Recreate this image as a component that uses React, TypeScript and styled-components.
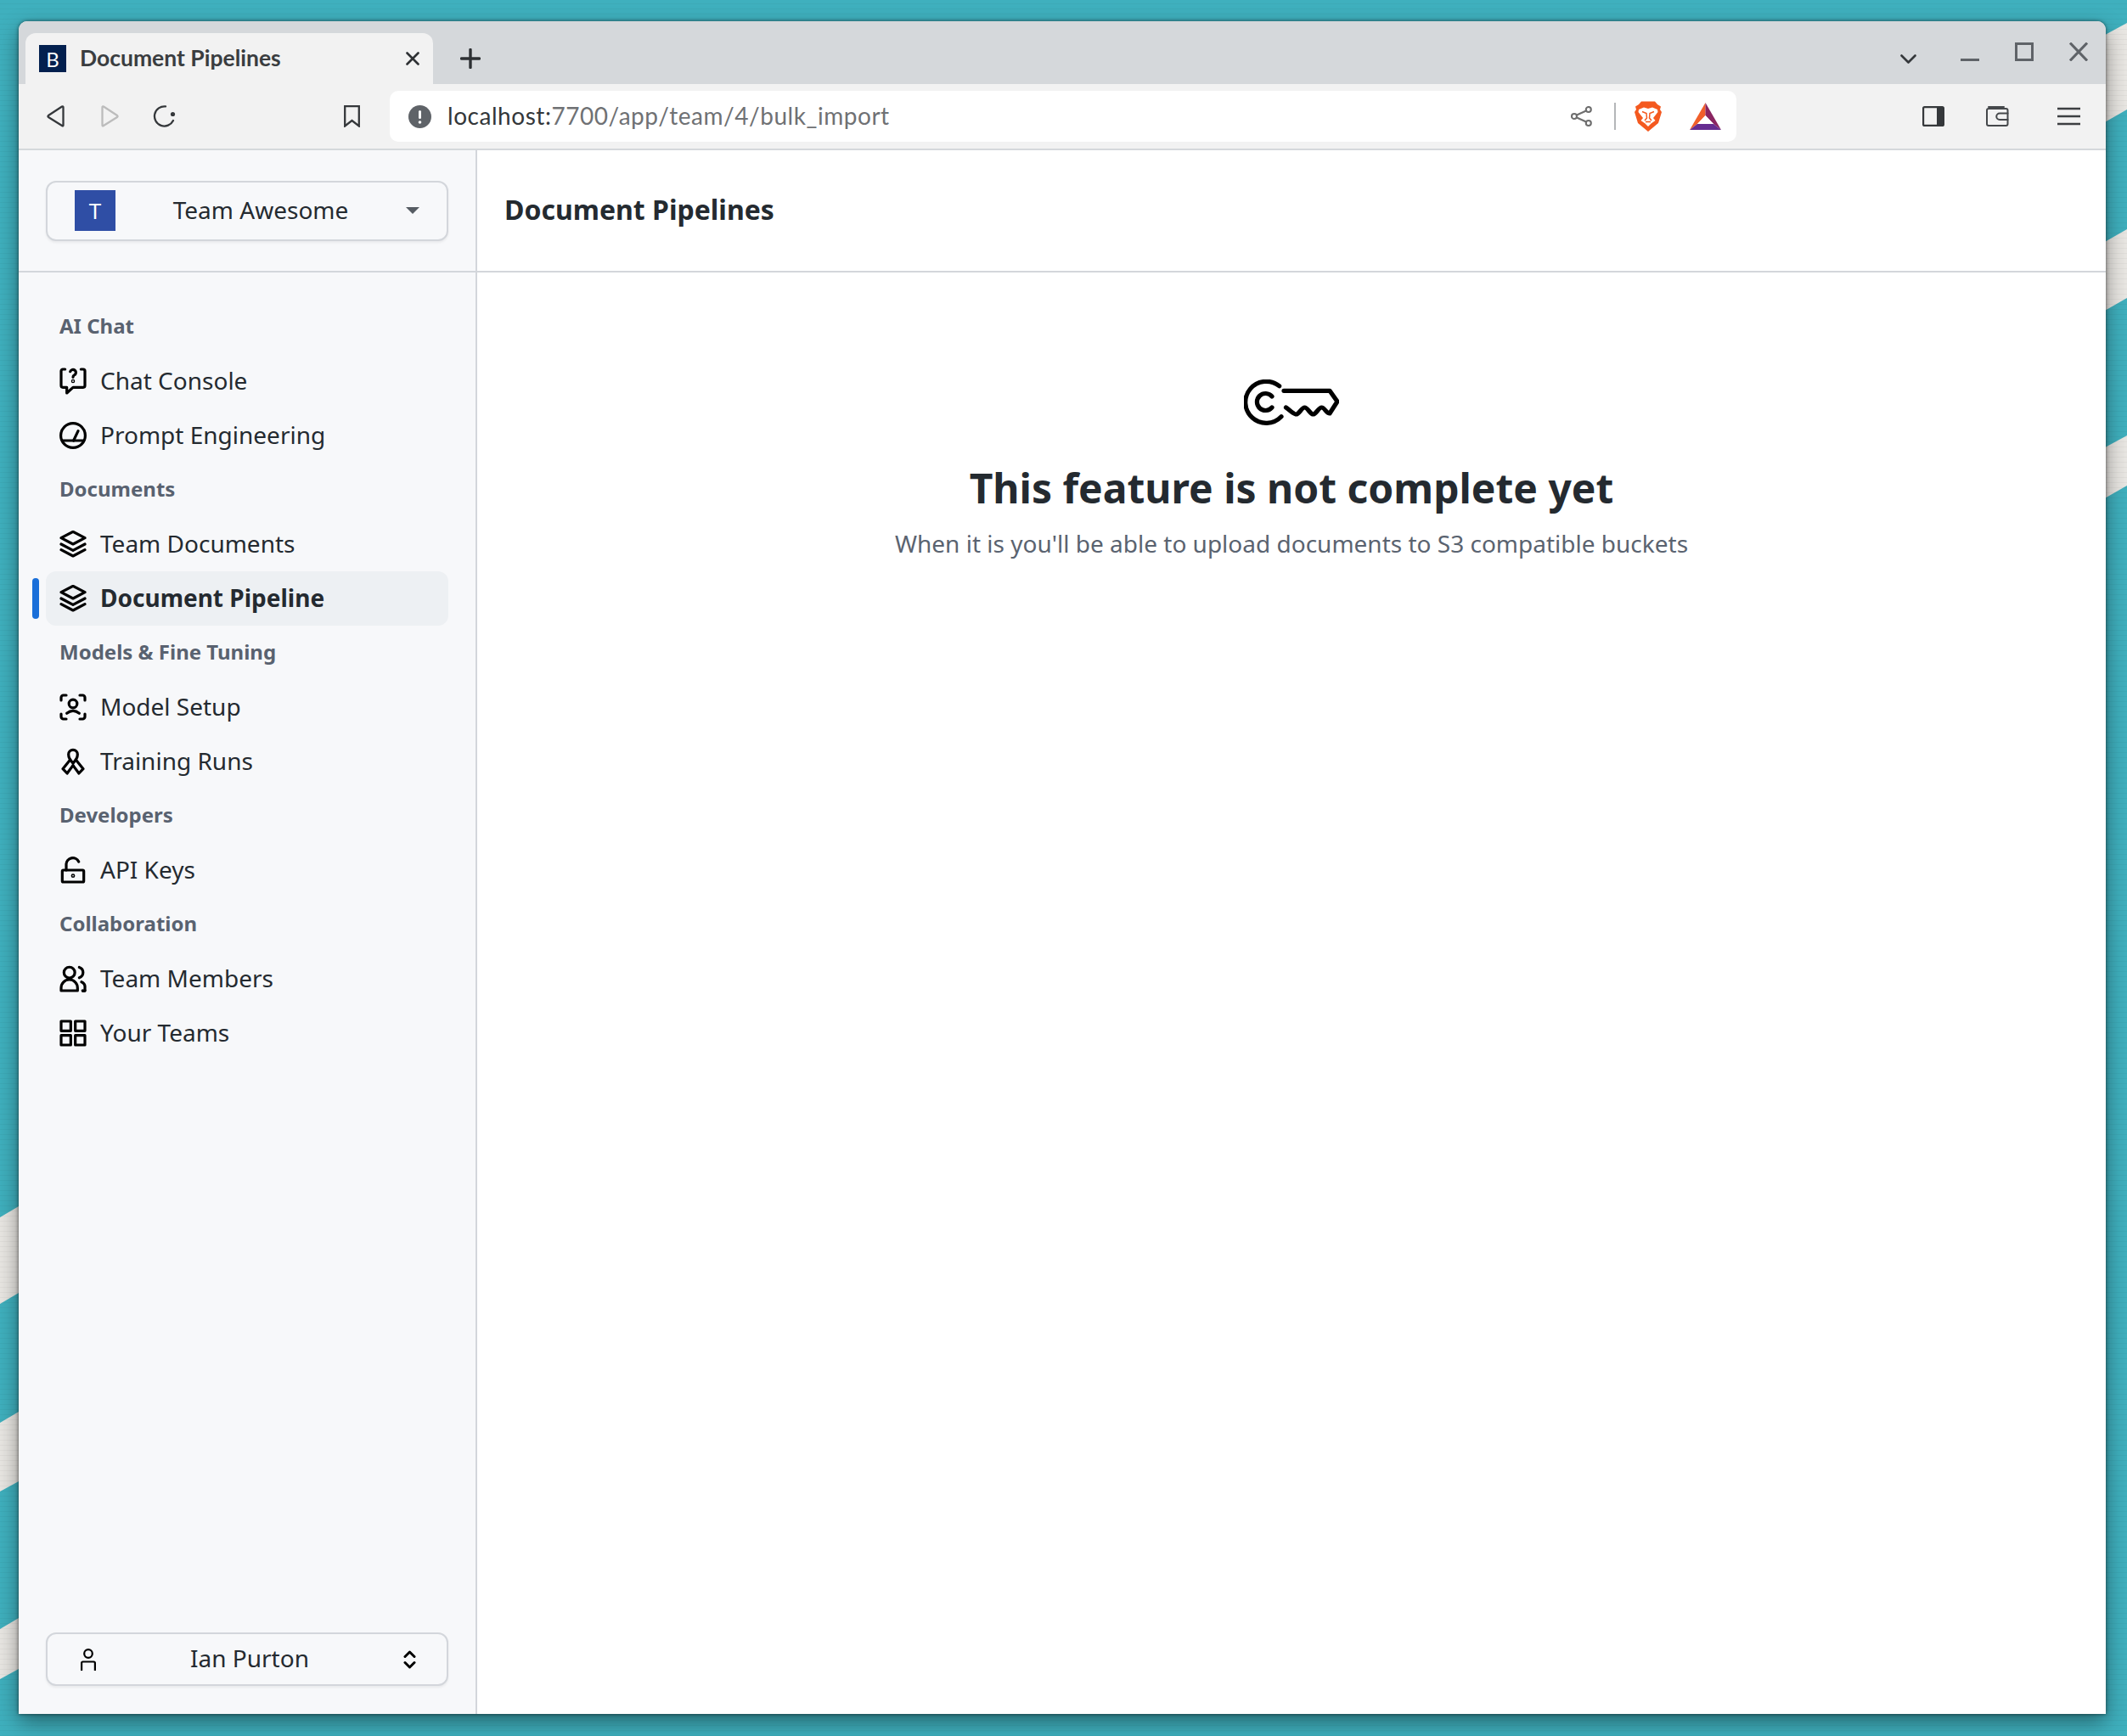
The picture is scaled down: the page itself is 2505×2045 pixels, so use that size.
import React from "react";
import styled, { createGlobalStyle } from "styled-components";

const Global = createGlobalStyle`
  html, body { margin: 0; padding: 0; background: #3fb0be; }
  * { box-sizing: border-box; }
`;

const Desktop = styled.div`
  position: relative;
  width: 2505px;
  height: 2045px;
  overflow: hidden;
  padding: 25px 25px 26px 22px;
  background: #3fb0be;
`;

const Wallpaper = styled.svg`
  position: absolute;
  inset: 0;
  width: 2505px;
  height: 2045px;
`;

const Grain = styled.div`
  position: absolute;
  inset: 0;
  background-image: repeating-linear-gradient(0deg, rgba(0, 0, 0, 0.035) 0 1px, transparent 1px 6px);
`;

const Window = styled.div`
  position: relative;
  width: 2458px;
  height: 1994px;
  display: flex;
  flex-direction: column;
  border-radius: 10px 10px 0 0;
  overflow: hidden;
  background: #fff;
  box-shadow: 0 0 4px rgba(0, 0, 0, 0.55);
`;

const WindowShade = styled.div`
  position: absolute;
  left: 22px;
  top: 25px;
  width: 2458px;
  height: 1994px;
  border-radius: 10px 10px 0 0;
  box-shadow: 0 10px 26px rgba(0, 0, 0, 0.42);
`;

const TabStrip = styled.div`
  height: 74px;
  flex: none;
  display: flex;
  align-items: flex-end;
  padding: 0 21px 0 8px;
  background: #d5d8db;
`;

const Tab = styled.div`
  width: 480px;
  height: 60px;
  display: flex;
  align-items: center;
  padding: 0 16px;
  border-radius: 12px 12px 0 0;
  background: #f2f2f2;
`;

const Favicon = styled.div`
  width: 32px;
  height: 32px;
  flex: none;
  display: flex;
  align-items: center;
  justify-content: center;
  background: #03204f;
  color: #fff;
  font: 400 24px "Lato", sans-serif;
`;

const TabTitle = styled.span`
  margin-left: 16px;
  margin-right: auto;
  padding-bottom: 3px;
  font: 700 26.5px "Lato", sans-serif;
  color: #3a3d40;
`;

const PlusWrap = styled.div`
  margin-left: 32px;
  align-self: flex-start;
  margin-top: 32px;
  display: flex;
`;

const WindowControls = styled.div`
  margin-left: auto;
  align-self: flex-start;
  margin-top: 25px;
  display: flex;
  align-items: flex-start;
  gap: 42px;
`;

const TabListButton = styled.div`
  margin-top: 14px;
  margin-right: 10px;
  display: flex;
`;

const Toolbar = styled.div`
  height: 78px;
  flex: none;
  display: flex;
  align-items: flex-start;
  padding: 8px 0 0 33px;
  background: #f2f2f2;
  border-bottom: 2px solid #d5d8db;
`;

const ToolIcon = styled.div<{ $ml: number }>`
  margin-left: ${(p) => p.$ml}px;
  height: 60px;
  display: flex;
  align-items: center;
  flex: none;
`;

const Omnibox = styled.div`
  width: 1586px;
  height: 60px;
  margin-left: 35px;
  flex: none;
  display: flex;
  align-items: center;
  padding: 0 18px 0 22px;
  border-radius: 10px;
  background: #fff;
`;

const Url = styled.span`
  margin-left: 19px;
  margin-right: auto;
  padding-bottom: 3px;
  font: 400 28px "Lato", sans-serif;
  letter-spacing: 0.54px;
  color: #6f7174;
`;

const UrlHost = styled.span`
  color: #33373a;
`;

const OmniDivider = styled.div`
  width: 2px;
  height: 32px;
  margin: 0 22px 0 26px;
  background: #b4b6b8;
`;

const BatWrap = styled.div`
  margin-left: 33px;
  display: flex;
`;

const Body = styled.div`
  flex: 1;
  min-height: 0;
  display: flex;
`;

const Sidebar = styled.aside`
  width: 540px;
  flex: none;
  display: flex;
  flex-direction: column;
  background: #f7f8fa;
  border-right: 2px solid #d3d6db;
`;

const SidebarTop = styled.div`
  height: 144px;
  flex: none;
  display: flex;
  align-items: center;
  padding: 0 32px;
  border-bottom: 2px solid #d3d6db;
`;

const SelectButton = styled.div<{ $h: number; $pl: number; $pr: number }>`
  width: 100%;
  height: ${(p) => p.$h}px;
  display: flex;
  align-items: center;
  justify-content: space-between;
  padding: 0 ${(p) => p.$pr}px 0 ${(p) => p.$pl}px;
  border: 2px solid #d3d6db;
  border-radius: 12px;
  background: #f7f8fa;
  box-shadow: 0 2px 3px rgba(0, 0, 0, 0.06);
  font: 400 28px "Noto Sans", sans-serif;
  color: #242a30;
`;

const LabelText = styled.span`
  padding-bottom: 3px;
`;

const Avatar = styled.div`
  width: 48px;
  height: 48px;
  display: flex;
  align-items: center;
  justify-content: center;
  background: #2f4ea5;
  color: #fff;
  font: 400 26px "Noto Sans", sans-serif;
`;

const Caret = styled.div`
  width: 0;
  height: 0;
  border-left: 8px solid transparent;
  border-right: 8px solid transparent;
  border-top: 8px solid #565c63;
`;

const Nav = styled.nav`
  flex: 1;
  display: flex;
  flex-direction: column;
  padding: 32px 32px 0 32px;
`;

const SectionLabel = styled.div`
  height: 64px;
  display: flex;
  align-items: center;
  padding: 0 0 3px 16px;
  font: 700 24px "Noto Sans", sans-serif;
  color: #596270;
`;

const NavRow = styled.div<{ $active?: boolean }>`
  position: relative;
  height: 64px;
  display: flex;
  align-items: center;
  gap: 16px;
  padding-left: 16px;
  border-radius: 12px;
  background: ${(p) => (p.$active ? "#edf0f3" : "transparent")};
  font: ${(p) => (p.$active ? 700 : 400)} 28px "Noto Sans", sans-serif;
  color: #242a30;
`;

const ActiveBar = styled.span`
  position: absolute;
  left: -16px;
  top: 8px;
  width: 8px;
  height: 48px;
  border-radius: 4px;
  background: #1a6fd9;
`;

const SidebarBottom = styled.div`
  padding: 0 32px 33px;
`;

const Main = styled.main`
  flex: 1;
  min-width: 0;
  display: flex;
  flex-direction: column;
`;

const Header = styled.header`
  height: 144px;
  flex: none;
  display: flex;
  align-items: center;
  padding: 0 0 3px 32px;
  border-bottom: 2px solid #d3d6db;
  font: 700 32px "Noto Sans", sans-serif;
  color: #242a30;
`;

const Empty = styled.section`
  display: flex;
  flex-direction: column;
  align-items: center;
  padding-top: 126px;
`;

const Title = styled.h1`
  margin: 42px 0 13px;
  font: 700 48px/64px "Noto Sans", sans-serif;
  color: #242a30;
`;

const Subtitle = styled.p`
  margin: 0;
  font: 400 28px/40px "Noto Sans", sans-serif;
  color: #5a6370;
`;

const Svg = styled.svg<{ $c?: string; $sw?: number }>`
  display: block;
  flex: none;
  fill: none;
  stroke: ${(p) => p.$c ?? "#000"};
  stroke-width: ${(p) => p.$sw ?? 2.4};
  stroke-linecap: round;
  stroke-linejoin: round;
`;

const Icon = ({ children }: { children: React.ReactNode }) => (
  <Svg width={32} height={32} viewBox="0 0 24 24" $sw={2.4}>
    {children}
  </Svg>
);

const ChatIcon = () => (
  <Icon>
    <path d="M5 1.500H3a1.500 1.500 0 0 0-1.500 1.500v13a1.500 1.500 0 0 0 1.500 1.500h3.500v5l5.500-5h9a1.500 1.500 0 0 0 1.500-1.500V3a1.500 1.500 0 0 0-1.500-1.500h-2" />
    <path d="M9.500 3.500a2.600 2.600 0 1 1 3.600 3.200c-.8.400-1.100.900-1.100 1.800" />
    <circle cx="12" cy="12" r=".5" />
  </Icon>
);
const GaugeIcon = () => (
  <Icon>
    <circle cx="12" cy="12" r="10.800" />
    <path d="M2.500 16.500h19" />
    <path d="M12.500 16.500L16.500 8" />
  </Icon>
);
const LayersIcon = () => (
  <Icon>
    <path d="M12 1L22.500 6.500L12 12L1.500 6.500Z" />
    <path d="M1.500 12L12 17.500L22.500 12" />
    <path d="M1.500 17L12 22.500L22.500 17" />
  </Icon>
);
const ScanIcon = () => (
  <Icon>
    <path d="M6 1.500H3.500a2 2 0 0 0-2 2V6" />
    <path d="M18 1.500h2.500a2 2 0 0 1 2 2V6" />
    <path d="M1.500 18v2.500a2 2 0 0 0 2 2H6" />
    <path d="M22.500 18v2.500a2 2 0 0 1-2 2H18" />
    <circle cx="12" cy="9" r="3.600" />
    <path d="M6.500 17.500Q12 13 17.500 17.500" />
  </Icon>
);
const RibbonIcon = () => (
  <Icon>
    <path d="M12 13.500C9.500 11 8 8.500 8 5.800a4 4 0 0 1 8 0c0 2.700-1.500 5.200-4 7.700Z" />
    <path d="M9.500 10.500L3 18.500L6.800 22.500L12 15.500" />
    <path d="M14.500 10.500L21 18.500L17.200 22.500L12 15.500" />
  </Icon>
);
const LockIcon = () => (
  <Icon>
    <rect x="2.500" y="12" width="19" height="10.500" rx="1" />
    <path d="M6 12V7a5.800 5.800 0 0 1 11-2.500" />
    <circle cx="12" cy="17" r=".6" />
  </Icon>
);
const UsersIcon = () => (
  <Icon>
    <circle cx="8.800" cy="6.500" r="4.800" />
    <path d="M1.500 22.500v-2.500a7.200 7.200 0 0 1 14.500 0v2.500Z" />
    <path d="M17.500 1.800a4.900 4.900 0 0 1 0 9.300" />
    <path d="M19.500 14.800a5 5 0 0 1 3 5.200v1.500a1 1 0 0 1-2 1" />
  </Icon>
);
const GridIcon = () => (
  <Icon>
    <rect x="1.500" y="1.500" width="8.500" height="8.500" />
    <rect x="14" y="1.500" width="8.500" height="8.500" />
    <rect x="1.500" y="14" width="8.500" height="8.500" />
    <rect x="14" y="14" width="8.500" height="8.500" />
  </Icon>
);

const groups: { label: string; items: { t: string; i: React.ReactNode; a?: boolean }[] }[] = [
  {
    label: "AI Chat",
    items: [
      { t: "Chat Console", i: <ChatIcon /> },
      { t: "Prompt Engineering", i: <GaugeIcon /> },
    ],
  },
  {
    label: "Documents",
    items: [
      { t: "Team Documents", i: <LayersIcon /> },
      { t: "Document Pipeline", i: <LayersIcon />, a: true },
    ],
  },
  {
    label: "Models & Fine Tuning",
    items: [
      { t: "Model Setup", i: <ScanIcon /> },
      { t: "Training Runs", i: <RibbonIcon /> },
    ],
  },
  { label: "Developers", items: [{ t: "API Keys", i: <LockIcon /> }] },
  {
    label: "Collaboration",
    items: [
      { t: "Team Members", i: <UsersIcon /> },
      { t: "Your Teams", i: <GridIcon /> },
    ],
  },
];

const Brave = () => (
  <svg width={32} height={36} viewBox="0 0 32 36">
    <path fill="#f4591f" d="M8 0.500H24L27 4L31 6.500L30 10L32 13L28 26L16 36L4 26L0 13L2 10L1 6.500L5 4Z" />
    <path fill="#fff" d="M5 10L11 7.500L16 9L21 7.500L27 10L27.500 13L22 20L24.500 23L19.500 26.500L16 30L12.500 26.500L7.500 23L10 20L4.500 13Z" />
    <path fill="none" stroke="#f4591f" strokeWidth="1.500" d="M9 12.500L14 14.500L14.500 20L12 23M23 12.500L18 14.500L17.500 20L20 23M13 24.500H19" />
  </svg>
);

const Bat = () => (
  <svg width={37} height={32} viewBox="0 0 37 32">
    <polygon fill="#f15f2a" points="18.500,0 18.500,15 9,25 0,32" />
    <polygon fill="#8a2561" points="18.500,0 37,32 28,25 18.500,15" />
    <polygon fill="#662d91" points="0,32 9,25 28,25 37,32" />
    <polygon fill="#fff" points="18.500,15 9,25 28,25" />
  </svg>
);

const Key = () => (
  <Svg width={112} height={54} viewBox="0 0 112 54" $sw={5.2}>
    <path d="M41.700 7.800A24.500 24.500 0 1 0 44 43.700" />
    <path d="M33 20A10 10 0 1 0 33 33" />
    <path d="M47 13.300H101L110 26L101 40C97 40 95 33 91.500 33S85 41 81.500 41S75 33 71.500 33S65 41 61.500 41S54 36 49.500 33" />
  </Svg>
);

const Wall = () => (
  <Wallpaper viewBox="0 0 2505 2045">
    <g fill="#e9e7e3">
      <polygon points="0,1434 22,1421 22,1523 0,1536" />
      <polygon points="0,1676 22,1663 22,1745 0,1757" />
      <polygon points="0,1919 22,1906 22,1966 0,1978" />
      <polygon points="2470,46 2505,27 2505,129 2470,149" />
      <polygon points="2470,290 2505,270 2505,351 2470,371" />
      <polygon points="2470,532 2505,513 2505,572 2470,592" />
    </g>
  </Wallpaper>
);

export default function App() {
  return (
    <>
      <Global />
      <Desktop>
        <Wall />
        <Grain />
        <WindowShade />
        <Window>
          <TabStrip>
            <Tab>
              <Favicon>B</Favicon>
              <TabTitle>Document Pipelines</TabTitle>
              <Svg width={16} height={16} viewBox="0 0 16 16" $c="#2e3134" $sw={2.6}>
                <path d="M1.500 1.500L14.500 14.500M14.500 1.500L1.500 14.500" />
              </Svg>
            </Tab>
            <PlusWrap>
              <Svg width={24} height={24} viewBox="0 0 24 24" $c="#2e3134" $sw={3.4}>
                <path d="M12 1.500V22.500M1.500 12H22.500" />
              </Svg>
            </PlusWrap>
            <WindowControls>
              <TabListButton>
                <Svg width={19} height={11} viewBox="0 0 19 11" $c="#35383b" $sw={2.6}>
                  <path d="M1.500 1.500L9.500 9.500L17.500 1.500" />
                </Svg>
              </TabListButton>
              <Svg width={22} height={22} viewBox="0 0 22 22" $c="#5f6368" $sw={3}>
                <path strokeLinecap="butt" d="M0 20.500H22" />
              </Svg>
              <Svg width={22} height={22} viewBox="0 0 22 22" $c="#5f6368" $sw={3}>
                <rect x="1.500" y="1.500" width="19" height="19" strokeLinejoin="miter" />
              </Svg>
              <Svg width={22} height={22} viewBox="0 0 22 22" $c="#5f6368" $sw={3}>
                <path strokeLinecap="butt" d="M1 0.500L21 21.500M21 0.500L1 21.500" />
              </Svg>
            </WindowControls>
          </TabStrip>
          <Toolbar>
            <ToolIcon $ml={0}>
              <Svg width={21} height={26} viewBox="0 0 21 26" $c="#35383b" $sw={2.3}>
                <path d="M19.500 2.500V23.500Q19.500 25 18 24L2 14Q1 13 2 12L18 1.500Q19.500 1 19.500 2.500Z" />
              </Svg>
            </ToolIcon>
            <ToolIcon $ml={43}>
              <Svg width={21} height={26} viewBox="0 0 21 26" $c="#bcbcbc" $sw={2.3}>
                <path d="M1.500 2.500V23.500Q1.500 25 3 24L19 14Q20 13 19 12L3 1.500Q1.500 1 1.500 2.500Z" />
              </Svg>
            </ToolIcon>
            <ToolIcon $ml={40}>
              <Svg width={27} height={26} viewBox="0 0 27 26" $c="#35383b" $sw={2.3}>
                <path d="M15 1.400A11.600 11.600 0 1 0 24 18" />
                <circle cx="23.500" cy="10.500" r="2.600" fill="#35383b" stroke="none" />
              </Svg>
            </ToolIcon>
            <ToolIcon $ml={198}>
              <Svg width={19} height={26} viewBox="0 0 19 26" $c="#35383b" $sw={2.3}>
                <path strokeLinejoin="miter" d="M1.200 1.200H17.800V24.500L9.500 18L1.200 24.500Z" />
              </Svg>
            </ToolIcon>
            <Omnibox>
              <svg width={27} height={27} viewBox="0 0 27 27">
                <circle cx="13.500" cy="13.500" r="13.500" fill="#5f6368" />
                <rect x="12" y="6" width="3" height="10" rx="1.500" fill="#fff" />
                <circle cx="13.500" cy="20" r="1.800" fill="#fff" />
              </svg>
              <Url>
                <UrlHost>localhost:</UrlHost>7700/app/team/4/bulk_import
              </Url>
              <Svg width={25} height={24} viewBox="0 0 25 24" $c="#6e6e6e" $sw={2.1}>
                <circle cx="20.800" cy="4" r="3" />
                <circle cx="4" cy="12" r="3" />
                <circle cx="20.800" cy="20" r="3" />
                <path d="M7 10.500L18 5.500M7 13.500L18 18.500" />
              </Svg>
              <OmniDivider />
              <Brave />
              <BatWrap>
                <Bat />
              </BatWrap>
            </Omnibox>
            <ToolIcon $ml={219}>
              <Svg width={26} height={24} viewBox="0 0 26 24" $c="#35383b" $sw={2.2}>
                <rect x="1.100" y="1.100" width="23.800" height="21.800" rx="1.500" />
                <rect x="17" y="1" width="8" height="22" fill="#35383b" stroke="none" />
              </Svg>
            </ToolIcon>
            <ToolIcon $ml={49}>
              <Svg width={27} height={24} viewBox="0 0 27 24" $c="#45484b" $sw={2}>
                <rect x="1" y="3" width="24.500" height="20" rx="2" />
                <path d="M3 1H21" />
                <path d="M25.500 8.500H16a3.500 3.500 0 0 0 0 7.500h9.500" />
              </Svg>
            </ToolIcon>
            <ToolIcon $ml={57}>
              <Svg width={27} height={22} viewBox="0 0 27 22" $c="#3c3f42" $sw={2.4}>
                <path strokeLinecap="butt" d="M0 2H27M0 11H27M0 20H27" />
              </Svg>
            </ToolIcon>
          </Toolbar>
          <Body>
            <Sidebar>
              <SidebarTop>
                <SelectButton $h={71} $pl={32} $pr={32}>
                  <Avatar>T</Avatar>
                  <LabelText>Team Awesome</LabelText>
                  <Caret />
                </SelectButton>
              </SidebarTop>
              <Nav>
                {groups.map((g) => (
                  <React.Fragment key={g.label}>
                    <SectionLabel>{g.label}</SectionLabel>
                    {g.items.map((it) => (
                      <NavRow key={it.t} $active={it.a}>
                        {it.a && <ActiveBar />}
                        {it.i}
                        <LabelText>{it.t}</LabelText>
                      </NavRow>
                    ))}
                  </React.Fragment>
                ))}
              </Nav>
              <SidebarBottom>
                <SelectButton $h={63} $pl={39} $pr={36}>
                  <Svg width={18} height={26} viewBox="0 0 18 26" $sw={2.2}>
                    <circle cx="9" cy="6" r="4.800" />
                    <path strokeLinecap="butt" d="M1.100 26V17Q1.100 15.500 2.600 15.500H15.400Q16.900 15.500 16.900 17V26" />
                  </Svg>
                  <LabelText>Ian Purton</LabelText>
                  <Svg width={15} height={22} viewBox="0 0 15 22" $sw={3}>
                    <path d="M2 7.500L7.500 2L13 7.500M2 14.500L7.500 20L13 14.500" />
                  </Svg>
                </SelectButton>
              </SidebarBottom>
            </Sidebar>
            <Main>
              <Header>Document Pipelines</Header>
              <Empty>
                <Key />
                <Title>This feature is not complete yet</Title>
                <Subtitle>When it is you'll be able to upload documents to S3 compatible buckets</Subtitle>
              </Empty>
            </Main>
          </Body>
        </Window>
      </Desktop>
    </>
  );
}
